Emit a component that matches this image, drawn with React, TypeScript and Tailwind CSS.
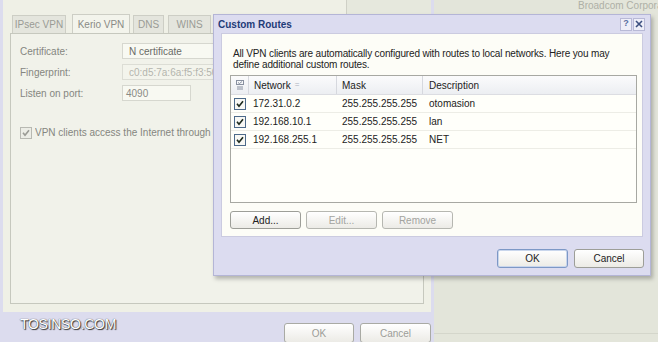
const routes = [
  { network: '172.31.0.2', mask: '255.255.255.255', description: 'otomasion' },
  { network: '192.168.10.1', mask: '255.255.255.255', description: 'lan' },
  { network: '192.168.255.1', mask: '255.255.255.255', description: 'NET' },
];

function CheckBox({ disabled = false }: { disabled?: boolean }) {
  return (
    <svg width="12" height="12" viewBox="0 0 12 12" className="shrink-0">
      <rect x="0.5" y="0.5" width="11" height="11" fill={disabled ? '#ecede6' : '#f8f8f4'} stroke={disabled ? '#b8b9b2' : '#4d6a8a'} />
      <path d="M3 5.8 L5 8.3 L9 3.2" fill="none" stroke={disabled ? '#9a9b95' : '#1d2a1d'} strokeWidth="1.6" />
    </svg>
  );
}

function XpButton({ label, className = '' }: { label: string; className?: string }) {
  return (
    <div
      className={`flex items-center justify-center rounded-[3px] border bg-gradient-to-b from-white to-[#ecebe6] text-[10px] ${className}`}
    >
      {label}
    </div>
  );
}

function BackgroundDialog() {
  return (
    <div className="flex h-full w-[434px] shrink-0 flex-col bg-[#dcdcee] px-[3px]">
      <div className="flex flex-1 flex-col bg-[#eff0e6]">
        <div className="flex h-[14px] shrink-0">
          <div className="flex-1" />
          <div className="w-[85px] border-l border-[#cfd0c6] bg-[#e6e8dd]" />
        </div>
        <div className="flex h-[19px] items-end pl-[9px] text-[10px] text-[#9a9b95]">
          <div className="mr-[6px] flex h-[18px] w-[54px] items-center justify-center border border-b-0 border-[#cdcec5] bg-[#e4e5dd]">IPsec VPN</div>
          <div className="mr-[3px] flex h-[19px] w-[58px] items-center justify-center border border-b-0 border-[#cdcec5] bg-[#f3f4ec] text-[#8a8b86]">Kerio VPN</div>
          <div className="mr-[4px] flex h-[18px] w-[31px] items-center justify-center border border-b-0 border-[#cdcec5] bg-[#e4e5dd]">DNS</div>
          <div className="flex h-[18px] w-[43px] items-center justify-center border border-b-0 border-[#cdcec5] bg-[#e4e5dd]">WINS</div>
        </div>
        <div className="mx-[7px] flex h-[271px] flex-col border border-[#c6c8be] bg-[#f1f2ea] px-[9px] pt-[9px] text-[10px] text-[#85867f]">
          <div className="flex h-[16px] items-center">
            <span className="w-[102px]">Certificate:</span>
            <div className="flex h-[16px] w-[200px] items-center border border-[#d6d7cf] bg-[#f8f9f2] pl-[6px] text-[#6a6b66]">N certificate</div>
          </div>
          <div className="mt-[5px] flex h-[16px] items-center">
            <span className="w-[102px]">Fingerprint:</span>
            <div className="flex h-[16px] w-[200px] items-center border border-[#dcddd5] bg-[#f3f4ec] pl-[6px] text-[#b4b5ae]">c0:d5:7a:6a:f5:f3:50</div>
          </div>
          <div className="mt-[5px] flex h-[16px] items-center">
            <span className="w-[102px]">Listen on port:</span>
            <div className="flex h-[16px] w-[69px] items-center border border-[#d6d7cf] bg-[#f8f9f2] pl-[3px] text-[#8a8b85]">4090</div>
          </div>
          <div className="mt-[24px] flex items-center gap-[3px] whitespace-nowrap">
            <CheckBox disabled />
            <span className="w-[176px] overflow-hidden">VPN clients access the Internet through the VPN server</span>
          </div>
        </div>
        <div className="h-[8px]" />
      </div>
      <div className="flex h-[30px] shrink-0 items-start justify-end gap-[6px] pt-[11px]">
        <XpButton label="OK" className="h-[20px] w-[70px] border-[#a9aaa4] text-[#9c9d98]" />
        <XpButton label="Cancel" className="h-[20px] w-[71px] border-[#a9aaa4] text-[#9c9d98]" />
      </div>
    </div>
  );
}

function CustomRoutes() {
  return (
    <div className="absolute left-[213px] top-[14px] flex h-[262px] w-[438px] flex-col border border-[#b4b5d6] bg-[#dcdcf0] shadow-[2px_3px_4px_rgba(0,0,0,0.25)]">
      <div className="flex h-[18px] shrink-0 items-center justify-between pl-[4px] pr-[5px]">
        <span className="text-[10px] font-bold text-[#1f3b78]">Custom Routes</span>
        <div className="flex gap-[1px]">
          <div className="flex h-[13px] w-[12px] items-center justify-center border border-[#b8b9d6] bg-[#eeeef8] text-[9px] font-bold text-[#5a6ea0]">?</div>
          <div className="flex h-[13px] w-[12px] items-center justify-center border border-[#b8b9d6] bg-[#eeeef8]">
            <svg width="8" height="8" viewBox="0 0 8 8">
              <path d="M1 1 L7 7 M7 1 L1 7" stroke="#3c4f80" strokeWidth="1.6" />
            </svg>
          </div>
        </div>
      </div>
      <div className="mx-[7px] flex h-[204px] flex-col border border-[#cbcbe0] bg-[#fdfdf7] pl-[8px] pr-[5px] pt-[14px] text-[10px] text-[#222]">
        <p className="pl-[3px] leading-[11px] tracking-[-0.15px]">
          All VPN clients are automatically configured with routes to local networks. Here you may
          <br />
          define additional custom routes.
        </p>
        <div className="mt-[5px] flex h-[128px] flex-col border border-[#a7a8a2] bg-[#fffffa]">
          <div className="flex h-[19px] shrink-0 border-b border-[#dcdde2] bg-gradient-to-b from-[#fbfbfc] to-[#eceef2]">
            <div className="flex w-[18px] items-center justify-center border-r border-[#d6d8de]">
              <svg width="8" height="11" viewBox="0 0 8 11">
                <rect x="0.5" y="0.5" width="7" height="4" fill="none" stroke="#8890a0" />
                <path d="M1 7 H7 M1 9 H7" stroke="#8890a0" />
                <path d="M2 2.5 L3.5 3.5 L6 1.5" stroke="#8890a0" fill="none" />
              </svg>
            </div>
            <div className="flex w-[88px] items-center gap-[4px] border-r border-[#d6d8de] pl-[5px]">
              Network
              <span className="text-[8px] text-[#aab0bc]">=</span>
            </div>
            <div className="flex w-[86px] items-center border-r border-[#d6d8de] pl-[5px]">Mask</div>
            <div className="flex flex-1 items-center pl-[6px]">Description</div>
          </div>
          {routes.map((r) => (
            <div key={r.network} className="flex h-[18px] shrink-0 items-center border-b border-[#ededE6]">
              <div className="flex w-[18px] justify-center">
                <CheckBox />
              </div>
              <div className="w-[88px] pl-[4px]">{r.network}</div>
              <div className="w-[86px] pl-[5px]">{r.mask}</div>
              <div className="flex-1 pl-[6px]">{r.description}</div>
            </div>
          ))}
        </div>
        <div className="mt-[8px] flex gap-[5px]">
          <XpButton label="Add..." className="h-[18px] w-[71px] border-[#9d9e98] text-[#222]" />
          <XpButton label="Edit..." className="h-[18px] w-[71px] border-[#b6b7b1] text-[#a3a49f]" />
          <XpButton label="Remove" className="h-[18px] w-[71px] border-[#b6b7b1] text-[#a3a49f]" />
        </div>
      </div>
      <div className="flex flex-1 items-start justify-end gap-[6px] pr-[6px] pt-[12px]">
        <XpButton label="OK" className="h-[19px] w-[71px] border-[#7d98c6] text-[#222] shadow-[inset_0_0_0_1px_#c9d6ec]" />
        <XpButton label="Cancel" className="h-[19px] w-[70px] border-[#9d9e98] text-[#222]" />
      </div>
    </div>
  );
}

export default function App() {
  return (
    <div className="relative flex h-[342px] w-[658px] overflow-hidden bg-[#e3e5da] font-['Liberation_Sans',Arial,sans-serif]">
      <BackgroundDialog />
      <div className="flex flex-1 flex-col">
        <div className="flex justify-end overflow-hidden text-[10px] leading-[12px] text-[#aeb0a6] whitespace-nowrap">
          <span className="w-[80px] overflow-hidden">Broadcom Corporation</span>
        </div>
        <div className="flex-1" />
        <div className="mb-[8px] border-t border-[#d4d6cb]" />
      </div>
      <CustomRoutes />
      <div className="absolute left-[20px] top-[314px] text-[14px] tracking-[-0.3px] text-white [text-shadow:0_0_1px_#222,1px_1px_1px_#333]">
        TOSINSO.COM
      </div>
    </div>
  );
}
